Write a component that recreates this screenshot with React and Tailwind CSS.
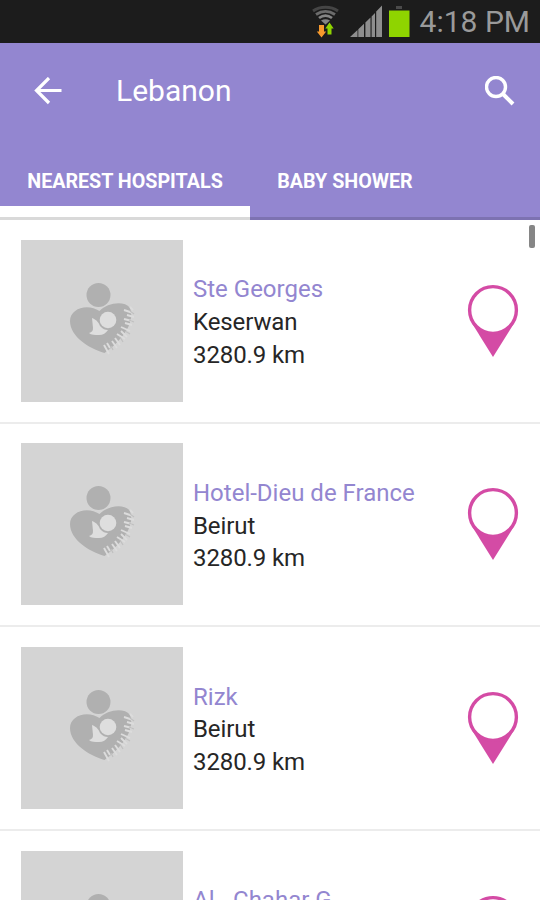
const hospitals = [
  { name: 'Ste Georges', city: 'Keserwan', distance: '3280.9 km' },
  { name: 'Hotel-Dieu de France', city: 'Beirut', distance: '3280.9 km' },
  { name: 'Rizk', city: 'Beirut', distance: '3280.9 km' },
  { name: 'Al - Chahar G', city: '', distance: '' },
]

function StatusBar() {
  return (
    <div className="flex h-[43px] shrink-0 items-center justify-end bg-[#1c1c1c] pr-[10px]">
      <svg className="h-[43px] w-[30px]" viewBox="0 0 30 43" fill="none" strokeWidth="2.8">
        <path d="M2 11C9 6 20 6 27 11" stroke="#454545" />
        <path d="M5 14.500C11 10.500 18 10.500 24 14.500" stroke="#6c6c6c" />
        <path d="M8 18C12 15 17 15 21 18" stroke="#858585" />
        <path d="M10 20.500L14.500 24.500L19 20.500C16 18.800 13 18.800 10 20.500Z" fill="#858585" />
        <path d="M8 25h5v6.500h2.200L10.500 37.500L5.800 31.500H8z" fill="#f79a2d" />
        <path d="M16.500 34.500h4v-6h2.200L18.500 22.500L14.300 28.500h2.200z" fill="#8fd400" />
      </svg>
      <svg className="ml-[9px] h-[43px] w-[33px]" viewBox="0 0 33 43" fill="#8e8e8e">
        <path d="M0 37L7.500 30V37zM8.300 29.200L14 23.800V37H8.300zM15.400 22.500L20.500 17.500V37H15.400zM21.600 16.500L25 13V37H21.600zM26.200 11.500L32 5.500V37H26.200z" />
      </svg>
      <svg className="ml-[5px] h-[43px] w-[22px]" viewBox="0 0 22 43">
        <path d="M8 6h6v3H8z" fill="#4a4a4a" />
        <path d="M1 10.500h20.500V37H1z" fill="#8fd400" />
      </svg>
      <span className="ml-[10px] text-[30px] leading-[43px] text-[#9a9a9a]">4:18 PM</span>
    </div>
  )
}

function Header() {
  return (
    <header className="flex h-[177px] shrink-0 flex-col bg-[#9386d0]">
      <div className="flex h-[96px] items-center pr-[25px] pl-[34px]">
        <svg className="h-[28px] w-[28px]" viewBox="0 0 28 28" fill="none" stroke="#fff" strokeWidth="3.2">
          <path d="M27.500 13.500H2.500M15 1L2.500 13.500L15 26" />
        </svg>
        <h1 className="ml-[54px] flex-1 text-[30px] leading-none text-white">Lebanon</h1>
        <svg className="h-[30px] w-[30px]" viewBox="0 0 30 30" fill="none" stroke="#fff">
          <circle cx="11" cy="11" r="9.500" strokeWidth="3.400" />
          <path d="M17.500 17.500L28 28" strokeWidth="4" />
        </svg>
      </div>
      <nav className="flex flex-1 text-[19.7px] font-bold text-white">
        <button className="w-[250px] border-b-[14px] border-white pt-[18px]">NEAREST HOSPITALS</button>
        <button className="w-[190px] border-b-[14px] border-transparent pt-[18px]">BABY SHOWER</button>
      </nav>
      <div className="-mt-[3px] h-[3px] bg-black/15"></div>
    </header>
  )
}

function Placeholder() {
  return (
    <svg className="size-[162px] shrink-0 bg-[#d4d4d4]" viewBox="0 0 162 162">
      <circle cx="77.500" cy="55" r="12" fill="#b0b0b0" />
      <path d="M83.500 113C67 108 49 96 49 81C49 68 67 63 78.500 71C86 63 103 60 109 68C115 84 98 103 83.500 113Z" fill="#b0b0b0" />
      <circle cx="87" cy="80" r="8.300" fill="#dedede" />
      <path d="M71 78C76 80 78 83 79 86C82 89 84 90 87 90C85 93 82 95 78 95C74 95 70 95 68 93C71 92 72 91 72 88Z" fill="#dedede" />
      <path
        d="M83 105L88 114M86 103L89 108M91 101L96 108M94 98L99 105M96 94L104 99M100 91L106 97M100 87L109 91M104 83L111 85M103 79L111 81M106 75L113 77M103 70L112 73M109 67L112 70"
        fill="none"
        stroke="#dcdcdc"
        strokeWidth="1.900"
      />
      <path d="M92 110L90 106M102 102L99 97M109 94L104 91M113 82L108 80M113 74L109 71" stroke="#c0c0c0" strokeWidth="1.200" />
    </svg>
  )
}

function Pin() {
  return (
    <svg className="h-[74px] w-[52px] shrink-0" viewBox="0 0 52 74">
      <path d="M4.800 39L26 73L47.200 39Z" fill="#d44ba5" />
      <circle cx="26" cy="26" r="23.400" fill="#fff" stroke="#d44ba5" strokeWidth="3.400" />
    </svg>
  )
}

function HospitalRow({ hospital }) {
  return (
    <li className="flex h-[203.67px] shrink-0 items-center border-b-2 border-[#ececec] pr-[21px] pl-[21px]">
      <Placeholder />
      <div className="ml-[10px] flex-1 pt-[3px] text-[24px] leading-[32.6px] whitespace-nowrap text-[#262626]">
        <h2 className="text-[#9386d0]">{hospital.name}</h2>
        <p className="h-[32.6px] tracking-[-0.1px]">{hospital.city}</p>
        <p className="h-[32.6px] tracking-[-0.1px]">{hospital.distance}</p>
      </div>
      <Pin />
    </li>
  )
}

export default function App() {
  return (
    <div className="relative flex h-[900px] w-[540px] flex-col overflow-hidden bg-white font-[Roboto,sans-serif]">
      <StatusBar />
      <Header />
      <ul className="flex flex-col">
        {hospitals.map(h => (
          <HospitalRow key={h.name} hospital={h} />
        ))}
      </ul>
      <div className="absolute top-[225px] right-[5px] h-[23px] w-[6px] rounded-[2px] bg-[#868686]"></div>
    </div>
  )
}
